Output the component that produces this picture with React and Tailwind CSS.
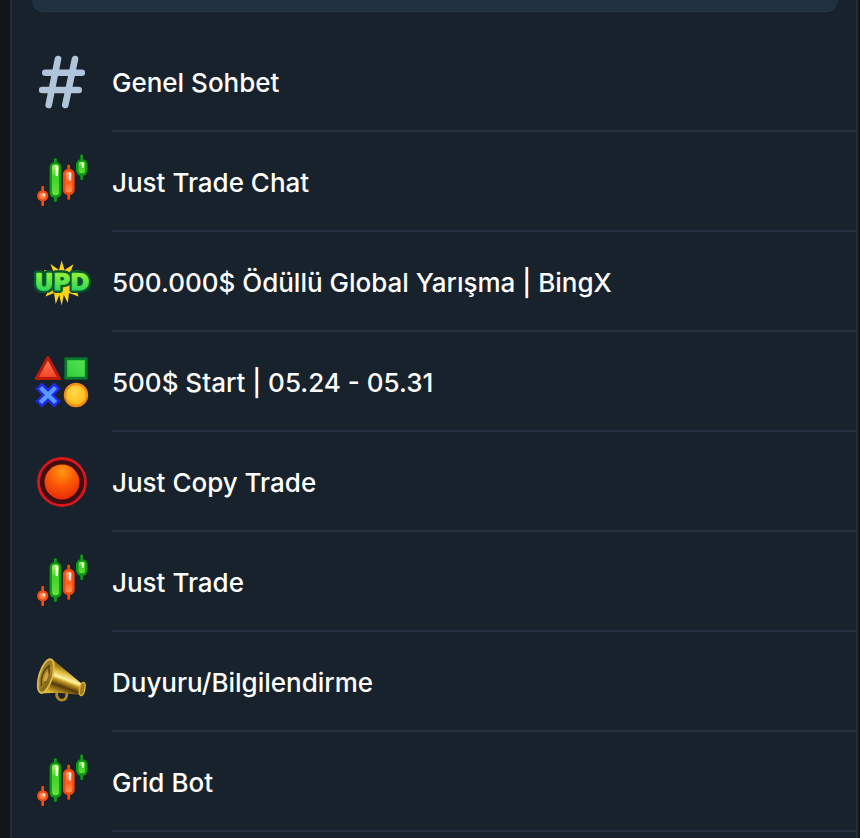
import React from 'react';

const HashIcon = () => (
  <svg className="h-15 w-15" viewBox="0 0 60 60" fill="none" stroke="#b0c4da" strokeWidth="6.6" strokeLinecap="round" aria-hidden="true">
    <path d="M26 7 16.7 53M43 7 33.3 53M13.3 20.7H49.8M10.2 38H46.7" />
  </svg>
);

const CandlesIcon = () => (
  <svg className="h-15 w-15" viewBox="0 0 60 60" aria-hidden="true">
    <defs>
      <linearGradient id="candleGreen" x1="0" y1="0" x2="0" y2="1">
        <stop offset="0" stopColor="#b5f56c" />
        <stop offset="0.4" stopColor="#3fd02c" />
        <stop offset="1" stopColor="#6ade3c" />
      </linearGradient>
      <linearGradient id="candleOrange" x1="0" y1="0" x2="0" y2="1">
        <stop offset="0" stopColor="#ff9a62" />
        <stop offset="0.5" stopColor="#ff5f22" />
        <stop offset="1" stopColor="#ff9150" />
      </linearGradient>
    </defs>
    <g fill="#f4480e">
      <rect x="9.3" y="34" width="2.8" height="20" rx="1" />
      <circle cx="10.7" cy="43.8" r="5.6" />
      <rect x="35.3" y="12.7" width="2.8" height="35" rx="1" />
      <rect x="31" y="17" width="11.6" height="26" rx="5" />
    </g>
    <g fill="#0b9a12">
      <rect x="21.9" y="6.3" width="3" height="43.5" rx="1" />
      <rect x="17.6" y="10.2" width="11.8" height="35.6" rx="5" />
      <rect x="48.3" y="2.6" width="2.8" height="25.4" rx="1" />
      <rect x="44" y="7" width="11.6" height="16.8" rx="5.6" />
    </g>
    <circle cx="10.7" cy="43.8" r="3.4" fill="#ff8148" />
    <rect x="33.4" y="19.5" width="6.8" height="21" rx="3.2" fill="url(#candleOrange)" />
    <rect x="20" y="12.6" width="7" height="30.6" rx="3.2" fill="url(#candleGreen)" />
    <rect x="46.5" y="9.8" width="6.6" height="11.4" rx="3.2" fill="url(#candleGreen)" />
    <ellipse cx="11.8" cy="42.8" rx="1.4" ry="1.8" fill="#ffe3d3" />
    <rect x="36.6" y="20.2" width="2.4" height="8.4" rx="1.2" fill="#ffe6da" />
    <rect x="23.6" y="13.2" width="2.4" height="11" rx="1.2" fill="#f1ffe4" />
    <rect x="49.7" y="10.4" width="2.2" height="5.4" rx="1.1" fill="#f1ffe4" />
  </svg>
);

const UpdIcon = () => (
  <svg className="h-15 w-15 overflow-visible" viewBox="0 0 60 60" aria-hidden="true">
    <defs>
      <linearGradient id="updFill" x1="0" y1="0" x2="0" y2="1">
        <stop offset="0.2" stopColor="#8af03a" />
        <stop offset="0.85" stopColor="#22d35e" />
      </linearGradient>
    </defs>
    <path
      d="M29.7 8.5 32.5 18 41.5 12.3 38.5 20 46.5 18 42 30 46.5 44.5 37 41 35.8 51 31.8 43 29.7 53.5 27.2 43 23.7 52 22 41 13.5 44.5 18 34 12 18 21.5 20 18.5 12 27 18Z"
      fill="#ffd21a"
    />
    <g fontFamily="'DejaVu Sans', sans-serif" fontWeight="700" fontSize="23" strokeLinejoin="round">
      <text x="30" y="38" textAnchor="middle" textRendering="geometricPrecision" fill="#06552f" stroke="#06552f" strokeWidth="6">UPD</text>
      <text x="30" y="38" textAnchor="middle" textRendering="geometricPrecision" fill="url(#updFill)" stroke="url(#updFill)" strokeWidth="1.2">UPD</text>
    </g>
  </svg>
);

const ShapesIcon = () => (
  <svg className="h-15 w-15" viewBox="0 0 60 60" aria-hidden="true">
    <defs>
      <linearGradient id="shapeRed" x1="0" y1="0" x2="0" y2="1">
        <stop offset="0" stopColor="#ff8058" />
        <stop offset="1" stopColor="#ef4426" />
      </linearGradient>
      <linearGradient id="shapeGreen" x1="1" y1="0" x2="0" y2="1">
        <stop offset="0" stopColor="#5ae650" />
        <stop offset="1" stopColor="#2ccb3a" />
      </linearGradient>
      <radialGradient id="shapeYellow" cx="0.4" cy="0.35" r="0.7">
        <stop offset="0" stopColor="#ffd94a" />
        <stop offset="1" stopColor="#ffb910" />
      </radialGradient>
    </defs>
    <path d="M15.9 5.5 27.4 26.4H4.4Z" fill="url(#shapeRed)" stroke="#b91c0c" strokeWidth="3" strokeLinejoin="round" />
    <rect x="33.8" y="6.8" width="20.4" height="19.4" fill="url(#shapeGreen)" stroke="#087a2c" strokeWidth="2.8" />
    <path d="M9.8 36.8 22.2 49.2M22.2 36.8 9.8 49.2" stroke="#2028ee" strokeWidth="9" strokeLinecap="square" fill="none" />
    <path d="M10 37 22 49M22 37 10 49" stroke="#579bff" strokeWidth="4.4" strokeLinecap="square" fill="none" />
    <circle cx="44" cy="43" r="11" fill="url(#shapeYellow)" stroke="#f28c14" strokeWidth="2.4" />
  </svg>
);

const RecordIcon = () => (
  <svg className="h-15 w-15" viewBox="0 0 60 60" aria-hidden="true">
    <defs>
      <radialGradient id="recordBall" cx="0.5" cy="0.22" r="0.75">
        <stop offset="0" stopColor="#ff9a10" />
        <stop offset="0.5" stopColor="#fb5a06" />
        <stop offset="1" stopColor="#ea2e06" />
      </radialGradient>
    </defs>
    <circle cx="30" cy="30" r="23.5" fill="#400d14" stroke="#d8161b" strokeWidth="2.8" />
    <circle cx="30" cy="30" r="17.5" fill="url(#recordBall)" />
  </svg>
);

const MegaphoneIcon = () => (
  <svg className="h-15 w-15" viewBox="0 0 60 60" aria-hidden="true">
    <defs>
      <linearGradient id="hornBody" gradientUnits="userSpaceOnUse" x1="36" y1="16" x2="26" y2="43">
        <stop offset="0.05" stopColor="#9a7812" />
        <stop offset="0.22" stopColor="#e0bd3c" />
        <stop offset="0.4" stopColor="#fff3a4" />
        <stop offset="0.5" stopColor="#c89a20" />
        <stop offset="0.68" stopColor="#523a08" />
        <stop offset="0.85" stopColor="#a57f18" />
        <stop offset="1" stopColor="#dcb83a" />
      </linearGradient>
      <linearGradient id="hornMouth" x1="0" y1="0" x2="1" y2="1">
        <stop offset="0" stopColor="#8a6a14" />
        <stop offset="0.5" stopColor="#b08c2a" />
        <stop offset="1" stopColor="#604508" />
      </linearGradient>
    </defs>
    <path d="M24.8 40C23 50.5 36 51 34.8 41" fill="none" stroke="#b08a22" strokeWidth="2.8" />
    <path d="M19.5 6.5 49.5 31.5 47.5 42.8 26 40.8 8 41.5Z" fill="url(#hornBody)" />
    <ellipse cx="50.2" cy="37" rx="2.6" ry="6.6" transform="rotate(12 50.2 37)" fill="#a37d1a" stroke="#d6b23c" strokeWidth="1.4" />
    <ellipse cx="13.8" cy="24" rx="6.6" ry="17.4" transform="rotate(17 13.8 24)" fill="url(#hornMouth)" stroke="#dcbb4c" strokeWidth="1.8" />
    <path d="M18 13C11 18 8 27 9.5 34M17 15C18 20 16 27 13 31" fill="none" stroke="#5f470e" strokeWidth="1.6" />
    <ellipse cx="14.2" cy="25" rx="2" ry="5" transform="rotate(17 14.2 25)" fill="#c9a640" />
  </svg>
);

const topics = [
  { title: 'Genel Sohbet', Icon: HashIcon },
  { title: 'Just Trade Chat', Icon: CandlesIcon },
  { title: '500.000$ Ödüllü Global Yarışma | BingX', Icon: UpdIcon },
  { title: '500$ Start | 05.24 - 05.31', Icon: ShapesIcon },
  { title: 'Just Copy Trade', Icon: RecordIcon },
  { title: 'Just Trade', Icon: CandlesIcon },
  { title: 'Duyuru/Bilgilendirme', Icon: MegaphoneIcon },
  { title: 'Grid Bot', Icon: CandlesIcon },
];

const TopicRow = ({ title, Icon }) => (
  <li>
    <button type="button" className="flex h-25 w-full items-center gap-5 pl-5 text-left">
      <Icon />
      <span className="flex h-full min-w-0 flex-1 items-center border-b-2 border-[#242f40] pt-1 text-[26px] leading-8 font-medium text-white">
        {title}
      </span>
    </button>
  </li>
);

const App = () => {
  return (
    <div className="min-h-screen bg-[#131618] pr-0.5 pl-2.5 font-['Inter',sans-serif]">
      <main className="min-h-screen border-x-2 border-[#232e3a] bg-[#18222c]">
        <div className="mr-4.5 ml-5 h-3 rounded-b-xl border-b border-[#2b3a4b] bg-[#213040]"></div>
        <ul className="pt-5">
          {topics.map((topic) => (
            <TopicRow key={topic.title} {...topic} />
          ))}
        </ul>
      </main>
    </div>
  );
};

export default App;
